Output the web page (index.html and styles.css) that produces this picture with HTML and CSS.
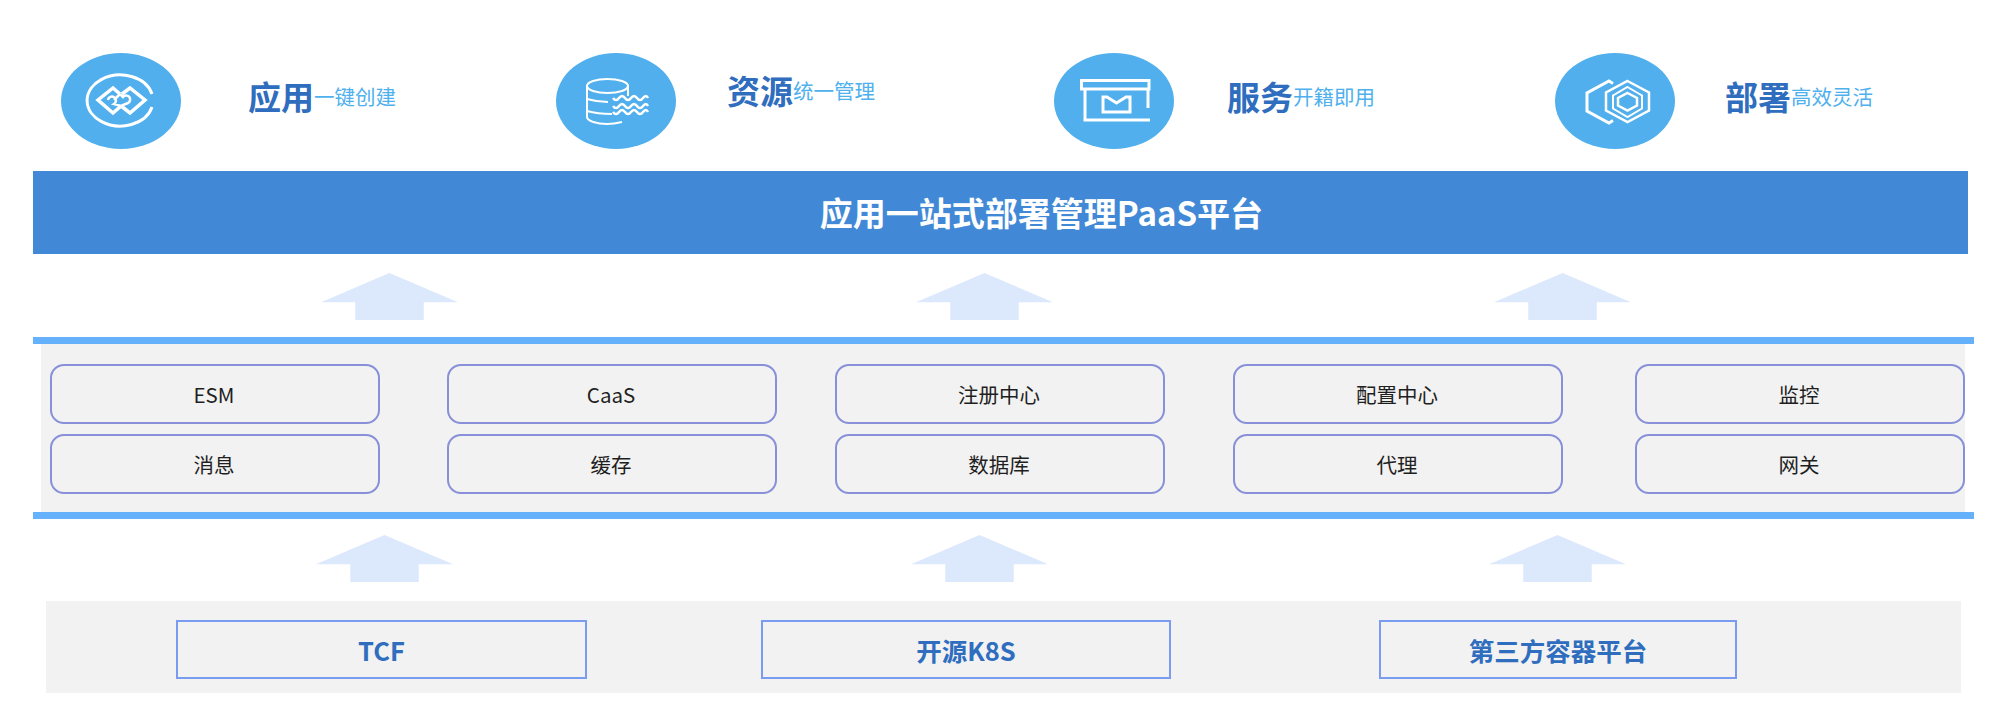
FILE: index.html
```html
<!DOCTYPE html>
<html lang="zh-CN">
<head>
<meta charset="utf-8">
<title>应用一站式部署管理PaaS平台</title>
<link rel="stylesheet" href="styles.css">
</head>
<body>
<header class="features">
  <div class="feature feature-app">
    <div class="badge">
      <svg class="glyph" viewBox="0 0 120 96" fill="none" stroke="#fff">
        <path stroke-width="3" d="M91 41A33 25.500 0 1 0 91 54"/>
        <path stroke-width="3.500" d="M59 41L52 35L37 47L52 60L60 53M61 41L69 35L84 47L69 60L60 53"/>
        <path stroke-width="2.500" d="M59 41L53 47M47 47A4 4 0 1 1 53 51L60 53L67 50A4 4 0 1 0 62 44L59 41"/>
      </svg>
    </div>
    <div class="caption"><span class="caption-main">应用</span><span class="caption-sub">一键创建</span></div>
  </div>
  <div class="feature feature-res">
    <div class="badge">
      <svg class="glyph" viewBox="0 0 120 96" fill="none" stroke="#fff" stroke-width="2">
        <ellipse cx="51.500" cy="33" rx="20.500" ry="7"/>
        <path d="M31 33V64C31 68 41 71 51 71C57 71 62 70 66 69"/>
        <path d="M72 33V43M31 46C38 48 46 49 52 49M31 58C38 60 46 61 56 61"/>
        <path stroke-width="2.500" d="M57 45q3 4 6 0t6 0t6 0t6 0t6 0t5 0M57 53q3 4 6 0t6 0t6 0t6 0t6 0t5 0M57 59q3 4 6 0t6 0t6 0t6 0t6 0t5 0"/>
      </svg>
    </div>
    <div class="caption"><span class="caption-main">资源</span><span class="caption-sub">统一管理</span></div>
  </div>
  <div class="feature feature-svc">
    <div class="badge">
      <svg class="glyph" viewBox="0 0 120 96" fill="none" stroke="#fff" stroke-width="3">
        <path d="M27.500 36V27.500H95V36ZM31 36V67H96M94 36V55"/>
        <path d="M49 44V59H76V44H72L62.500 50L53 44Z"/>
      </svg>
    </div>
    <div class="caption"><span class="caption-main">服务</span><span class="caption-sub">开籍即用</span></div>
  </div>
  <div class="feature feature-dep">
    <div class="badge">
      <svg class="glyph" viewBox="0 0 120 96" fill="none" stroke="#fff">
        <path stroke-width="2.500" d="M72.500 28L94 39.500V57.500L72.500 69L51 57.500V39.500Z"/>
        <path stroke-width="2" d="M72.500 34L87 42.500V55.500L72.500 64L58 55.500V42.500Z"/>
        <path stroke-width="2.500" d="M72.500 40L82 45V52.500L72.500 57.500L63 52.500V45Z"/>
        <path stroke-width="3" d="M58 30.500L54 28L32 40V58L54 70L58 67.500"/>
      </svg>
    </div>
    <div class="caption"><span class="caption-main">部署</span><span class="caption-sub">高效灵活</span></div>
  </div>
</header>

<h1 class="banner">应用一站式部署管理PaaS平台</h1>

<div class="arrows arrows-upper">
  <div class="arrow"></div>
  <div class="arrow"></div>
  <div class="arrow"></div>
</div>

<section class="band">
  <div class="services">
    <div class="service">ESM</div>
    <div class="service">CaaS</div>
    <div class="service">注册中心</div>
    <div class="service">配置中心</div>
    <div class="service">监控</div>
    <div class="service">消息</div>
    <div class="service">缓存</div>
    <div class="service">数据库</div>
    <div class="service">代理</div>
    <div class="service">网关</div>
  </div>
</section>

<div class="arrows arrows-lower">
  <div class="arrow"></div>
  <div class="arrow"></div>
  <div class="arrow"></div>
</div>

<section class="platforms">
  <div class="platform platform-tcf">TCF</div>
  <div class="platform platform-k8s">开源K8S</div>
  <div class="platform platform-third">第三方容器平台</div>
</section>
</body>
</html>
```
FILE: styles.css
```css
* {
  box-sizing: border-box;
}

html,
body {
  margin: 0;
  background: #fff;
}

body {
  width: 2000px;
  height: 714px;
  overflow: hidden;
  font-family: "Noto Sans CJK SC", "Noto Sans", sans-serif;
}

.features {
  display: grid;
  grid-template-columns: 495px 498px 501px 1fr;
  padding: 53px 0 0 61px;
}

.feature {
  display: flex;
  align-items: center;
}

.feature-app {
  gap: 67px;
}

.feature-res {
  gap: 51px;
}

.feature-svc {
  gap: 53px;
}

.feature-dep {
  gap: 50px;
}

.badge {
  flex: none;
  width: 120px;
  height: 96px;
  border-radius: 50%;
  background: #50afec;
}

.glyph {
  display: block;
  width: 120px;
  height: 96px;
}

.caption {
  display: flex;
  align-items: center;
  margin-bottom: 10px;
  line-height: 40px;
}

.feature-res .caption {
  margin-bottom: 22px;
}

.caption-main {
  font-size: 33px;
  font-weight: 700;
  color: #2f6dbe;
}

.caption-sub {
  font-size: 20.500px;
  color: #4fb0ee;
}

.banner {
  height: 83px;
  width: 1935px;
  margin: 22px 0 0 33px;
  padding-left: 82px;
  background: #4189d6;
  color: #fff;
  font-size: 33px;
  font-weight: 700;
  line-height: 83px;
  text-align: center;
}

.arrows {
  display: grid;
  height: 83px;
}

.arrows-upper {
  grid-template-columns: 595px 578px 137px;
  padding: 19px 0 0 321px;
}

.arrows-lower {
  height: 82px;
  grid-template-columns: 595px 578px 137px;
  padding: 16px 0 0 316px;
}

.arrow {
  width: 137px;
  height: 47px;
  background: #dce8fc;
  clip-path: polygon(50% 0, 100% 62%, 75% 62%, 75% 100%, 25% 100%, 25% 62%, 0 62%);
}

.band {
  width: 1941px;
  margin-left: 33px;
  border-top: 7px solid #66b1fc;
  border-bottom: 7px solid #66b1fc;
}

.services {
  display: grid;
  grid-template-columns: 397px 388px 398px 402px 330px;
  grid-auto-rows: 60px;
  row-gap: 10px;
  width: 1924px;
  height: 168px;
  margin-left: 8px;
  padding: 20px 0 0 9px;
  background: #f2f2f2;
}

.service {
  width: 330px;
  height: 60px;
  padding-right: 2px;
  border: 2px solid #8790d8;
  border-radius: 14px;
  color: #1f1f1f;
  font-size: 20.500px;
  line-height: 56px;
  text-align: center;
}

.platforms {
  display: grid;
  grid-template-columns: 585px 618px 358px;
  width: 1915px;
  height: 92px;
  margin-left: 46px;
  padding: 19px 0 0 130px;
  background: #f2f2f2;
}

.platform {
  height: 59px;
  border: 2px solid #7a9cf0;
  color: #2f6dbe;
  font-size: 25.500px;
  font-weight: 700;
  line-height: 55px;
  text-align: center;
}

.platform-tcf {
  width: 411px;
}

.platform-k8s {
  width: 410px;
}

.platform-third {
  width: 358px;
}
```
